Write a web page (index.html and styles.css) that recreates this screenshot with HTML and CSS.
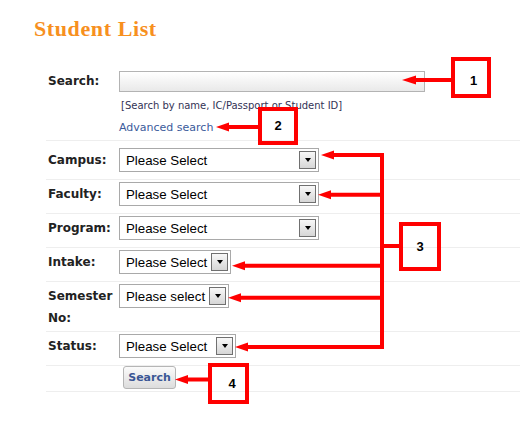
FILE: index.html
```html
<!DOCTYPE html>
<html lang="en">
<head>
<meta charset="utf-8">
<title>Student List</title>
<link rel="stylesheet" href="styles.css">
</head>
<body>
<h1 class="title">Student List</h1>
<form class="form">
  <div class="row row-search">
    <div class="label label-search">Search:</div>
    <div class="field">
      <div class="input"></div>
      <div class="hint">[Search by name, IC/Passport or Student ID]</div>
      <a class="adv" href="#">Advanced search</a>
    </div>
  </div>
  <div class="row row-first">
    <div class="label">Campus:</div>
    <div class="field"><div class="select w-wide"><span>Please Select</span><span class="dd"></span></div></div>
  </div>
  <div class="row">
    <div class="label">Faculty:</div>
    <div class="field"><div class="select w-wide"><span>Please Select</span><span class="dd"></span></div></div>
  </div>
  <div class="row">
    <div class="label">Program:</div>
    <div class="field"><div class="select w-wide"><span>Please Select</span><span class="dd"></span></div></div>
  </div>
  <div class="row">
    <div class="label">Intake:</div>
    <div class="field"><div class="select w-intake"><span>Please Select</span><span class="dd"></span></div></div>
  </div>
  <div class="row">
    <div class="label">Semester No:</div>
    <div class="field"><div class="select w-sem"><span>Please select</span><span class="dd"></span></div></div>
  </div>
  <div class="row">
    <div class="label">Status:</div>
    <div class="field"><div class="select w-status"><span>Please Select</span><span class="dd"></span></div></div>
  </div>
  <div class="row row-button">
    <div class="label"></div>
    <div class="field"><button type="button" class="btn">Search</button></div>
  </div>
</form>

<svg class="notes" width="520" height="424" viewBox="0 0 520 424">
  <g fill="none" stroke="#ff0000" stroke-width="4">
    <rect x="453" y="59" width="36" height="37"/>
    <rect x="260" y="109" width="36" height="34"/>
    <rect x="401" y="224" width="38" height="45"/>
    <rect x="210" y="365" width="37" height="37"/>
    <path d="M451 80H415 M259 127H228 M382 153V349 M382 155H333 M382 194.7H330 M382 246H401 M382 265.7H244 M382 297.7H240 M384 347H247 M208 379.5H187"/>
  </g>
  <g fill="#ff0000">
    <polygon points="402,80 416,75.5 416,84.5"/>
    <polygon points="216,127 229,122.5 229,131.5"/>
    <polygon points="321,155 334,150.5 334,159.5"/>
    <polygon points="318,194.7 331,190.2 331,199.2"/>
    <polygon points="232,265.7 245,261.2 245,270.2"/>
    <polygon points="228,297.7 241,293.2 241,302.2"/>
    <polygon points="235,347 248,342.5 248,351.5"/>
    <polygon points="175,379.5 188,375 188,384"/>
  </g>
  <g class="num">
    <text x="473.5" y="85">1</text>
    <text x="278" y="129.5">2</text>
    <text x="420" y="251">3</text>
    <text x="232" y="387.5">4</text>
  </g>
</svg>
</body>
</html>
```

FILE: styles.css
```css
html, body {
  margin: 0;
  padding: 0;
  background: #ffffff;
}

body {
  position: relative;
  width: 520px;
  height: 424px;
  overflow: hidden;
  font-family: "DejaVu Sans", Verdana, sans-serif;
  color: #222222;
}

.title {
  margin: 16px 0 0 34px;
  font: bold 22px/26px "Liberation Serif", Georgia, serif;
  letter-spacing: 0.6px;
  color: #f7901e;
}

.form {
  margin: 29px 0 0 46px;
}

.row {
  display: grid;
  grid-template-columns: 71px 1fr;
  padding: 2px 0 2px 2px;
  border-top: 1px solid #eeeeee;
}

.row-search {
  border-top: none;
  padding: 0 0 5px 2px;
}

.row-first {
  padding-top: 7px;
}

.row-button {
  padding-top: 0;
  padding-bottom: 2px;
  border-bottom: 1px solid #eeeeee;
}

.label {
  font: bold 12px/22px "DejaVu Sans", Verdana, sans-serif;
  color: #222222;
  padding-top: 1px;
}

.label-search {
  line-height: 21px;
  padding-top: 0;
}

.input {
  box-sizing: border-box;
  width: 306px;
  height: 21px;
  border: 1px solid #b3b3b3;
  background: linear-gradient(#ffffff, #e9e9e9);
}

.hint {
  margin-top: 7px;
  padding-left: 2px;
  font: 10px/14px "DejaVu Sans", Verdana, sans-serif;
  color: #333355;
}

.adv {
  display: block;
  margin-top: 8px;
  font: 11px/14px "DejaVu Sans", Verdana, sans-serif;
  color: #3b5b9b;
  text-decoration: none;
}

.select {
  display: flex;
  align-items: center;
  justify-content: space-between;
  box-sizing: border-box;
  height: 24px;
  margin-bottom: 5px;
  padding: 0 2px 0 6px;
  border: 1px solid #a9a9a9;
  background: #ffffff;
  font: 13.3px "Liberation Sans", Arial, sans-serif;
  color: #000000;
}

.w-wide { width: 200px; }
.w-intake { width: 112px; }
.w-sem { width: 110px; }
.w-status { width: 117px; }

.dd {
  display: flex;
  align-items: center;
  justify-content: center;
  box-sizing: border-box;
  width: 17px;
  height: 18px;
  border: 1px solid #707070;
  background: linear-gradient(#f8f8f8, #d6d6d6);
}

.dd::before {
  content: "";
  border-left: 3.5px solid transparent;
  border-right: 3.5px solid transparent;
  border-top: 4px solid #000000;
}

.btn {
  box-sizing: border-box;
  width: 53px;
  height: 23px;
  margin-left: 4px;
  padding: 0;
  border: 1px solid #b5b5b5;
  border-radius: 3px;
  background: linear-gradient(#fbfbfb, #dcdcdc);
  font: bold 11px "DejaVu Sans", Verdana, sans-serif;
  color: #3a5795;
}

.notes {
  position: absolute;
  left: 0;
  top: 0;
  pointer-events: none;
}

.num text {
  font: bold 13px "Liberation Sans", Arial, sans-serif;
  fill: #000000;
  text-anchor: middle;
}
```
